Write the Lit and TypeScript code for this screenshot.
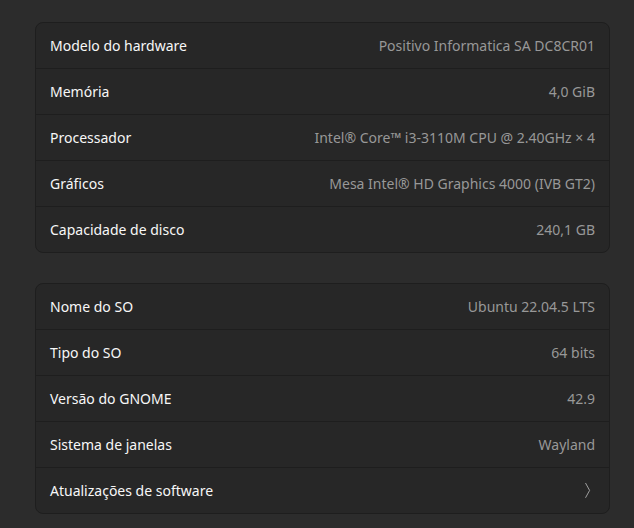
import { LitElement, html, css } from "lit";
import { customElement, property } from "lit/decorators.js";

type Row = [label: string, value: string];

const HARDWARE: Row[] = [
  ["Modelo do hardware", "Positivo Informatica SA DC8CR01"],
  ["Memória", "4,0 GiB"],
  ["Processador", "Intel® Core™ i3-3110M CPU @ 2.40GHz × 4"],
  ["Gráficos", "Mesa Intel® HD Graphics 4000 (IVB GT2)"],
  ["Capacidade de disco", "240,1 GB"],
];

const SYSTEM: Row[] = [
  ["Nome do SO", "Ubuntu 22.04.5 LTS"],
  ["Tipo do SO", "64 bits"],
  ["Versão do GNOME", "42.9"],
  ["Sistema de janelas", "Wayland"],
];

@customElement("info-card")
class InfoCard extends LitElement {
  @property({ attribute: false }) rows: Row[] = [];
  @property() action = "";

  static styles = css`
    :host {
      display: block;
      overflow: hidden;
      border: 1px solid #1e1e1e;
      border-radius: 8px;
      background: #272727;
    }
    .list {
      margin: 0;
    }
    .row {
      display: flex;
      align-items: center;
      justify-content: space-between;
      gap: 16px;
      box-sizing: border-box;
      width: 100%;
      min-height: 45px;
      padding: 0 14px;
      color: #f7f7f7;
    }
    .row + .row,
    .action {
      border-top: 1px solid #1e1e1e;
      min-height: 46px;
    }
    .value {
      margin: 0;
      color: #989898;
      text-align: right;
    }
    .action {
      border-width: 1px 0 0;
      background: none;
      font: inherit;
      text-align: left;
      cursor: pointer;
    }
    .action:hover {
      background: #2d2d2d;
    }
    .chevron {
      flex: none;
      width: 16px;
      height: 16px;
      fill: none;
      stroke: #a0a0a0;
    }
  `;

  render() {
    return html`
      <dl class="list">
        ${this.rows.map(
          ([label, value]) => html`
            <div class="row">
              <dt>${label}</dt>
              <dd class="value">${value}</dd>
            </div>
          `,
        )}
      </dl>
      ${this.action
        ? html`
            <button class="row action" type="button">
              <span>${this.action}</span>
              <svg class="chevron" viewBox="0 0 16 16" aria-hidden="true">
                <path d="M6.5 0 L10.6 7.4 L6.5 14.8" />
              </svg>
            </button>
          `
        : ""}
    `;
  }
}

@customElement("app-root")
class AppRoot extends LitElement {
  static styles = css`
    :host {
      display: block;
      box-sizing: border-box;
      min-height: 100vh;
      background: #2c2c2c;
      font: 14px/20px "Noto Sans", "Open Sans", sans-serif;
    }
    .page {
      display: flex;
      flex-direction: column;
      gap: 30px;
      padding: 22px 24px 14px 35px;
    }
  `;

  render() {
    return html`
      <main class="page">
        <info-card .rows=${HARDWARE}></info-card>
        <info-card .rows=${SYSTEM} action="Atualizações de software"></info-card>
      </main>
    `;
  }
}
